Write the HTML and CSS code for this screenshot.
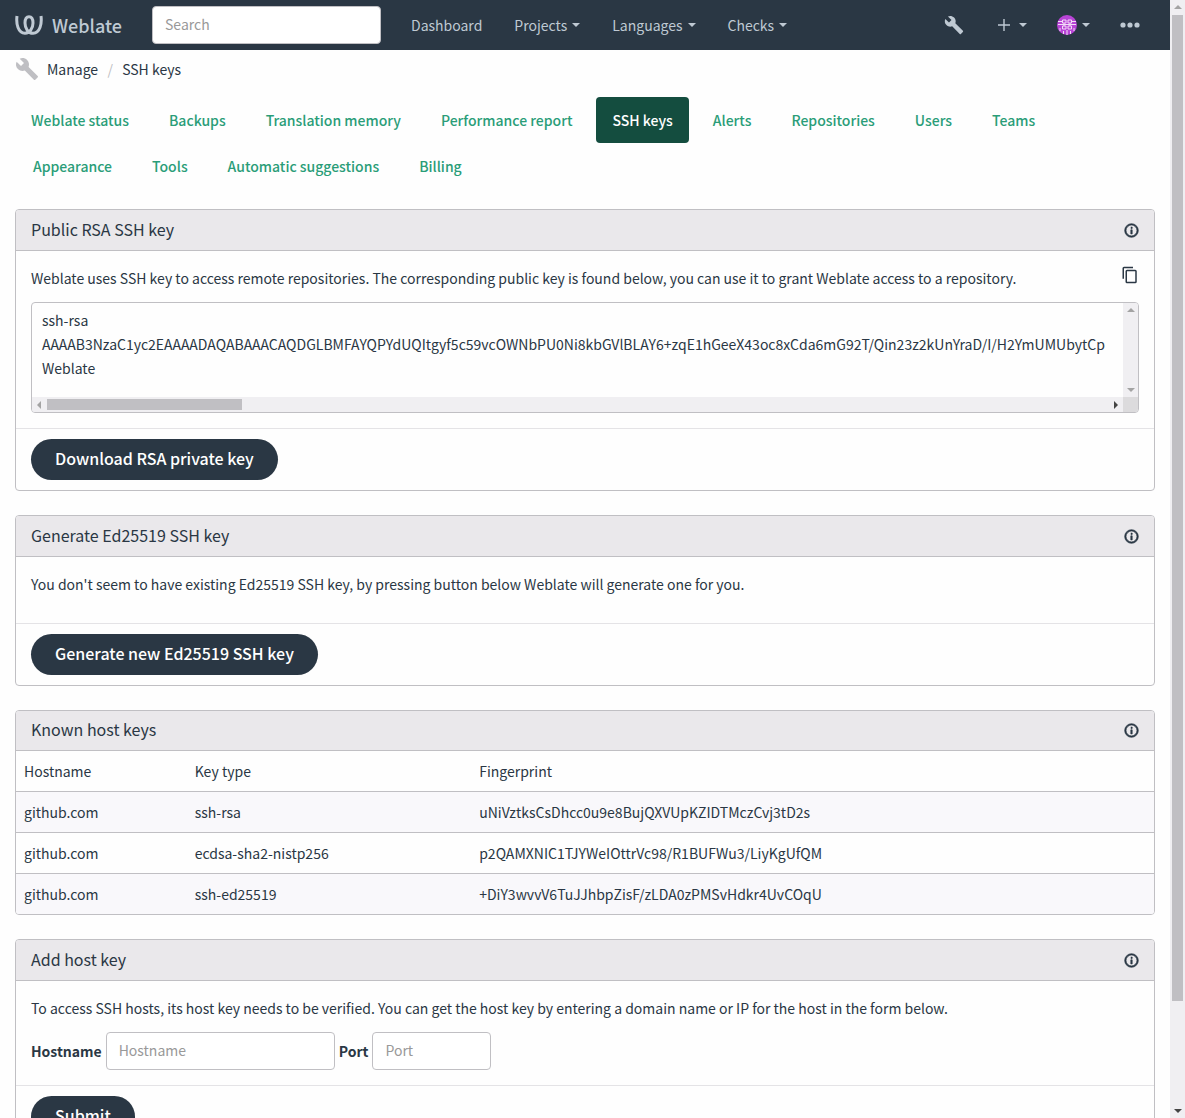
FILE: index.html
```html
<!DOCTYPE html>
<html lang="en">
<head>
<meta charset="utf-8">
<title>SSH keys - Weblate</title>
<link rel="stylesheet" href="styles.css">
</head>
<body>
<svg class="sprite" aria-hidden="true">
  <symbol id="wrench" viewBox="0 0 24 24"><path d="M22.7 19l-9.1-9.1c.9-2.3.4-5-1.5-6.9-2-2-5-2.4-7.4-1.3L9 6 6 9 1.6 4.7C.4 7.1.9 10.1 2.9 12.1c1.9 1.9 4.6 2.4 6.9 1.5l9.1 9.1c.4.4 1 .4 1.4 0l2.3-2.3c.5-.4.5-1.1.1-1.4z"/></symbol>
  <symbol id="info" viewBox="1 1 22 22"><path d="M11 9h2V7h-2m1 13c-4.410 0-8-3.590-8-8s3.590-8 8-8 8 3.590 8 8-3.590 8-8 8m0-18A10 10 0 0 0 2 12a10 10 0 0 0 10 10 10 10 0 0 0 10-10A10 10 0 0 0 12 2m-1 15h2v-6h-2v6z" stroke="currentColor"/></symbol>
  <symbol id="copy" viewBox="0 0 24 24"><path d="M19 21H8V7h11m0-2H8a2 2 0 0 0-2 2v14a2 2 0 0 0 2 2h11a2 2 0 0 0 2-2V7a2 2 0 0 0-2-2m-3-4H4a2 2 0 0 0-2 2v14h2V3h12V1z"/></symbol>
</svg>
<div class="page">
  <header class="navbar">
    <a class="brand" href="#">
      <svg class="logo" viewBox="0 0 28 20" aria-hidden="true"><g fill="none" stroke="currentColor" stroke-width="3"><path d="M2 1C1 9 3 18 10 18.300C15 18 18 13 18 8C18 4 16.500 1.700 14 1.700C11.500 1.700 10 4 10 8C10 13 13 18.300 18 18.300C25 18 27 9 26 1"/></g></svg>
      <span>Weblate</span>
    </a>
    <input class="field search" type="search" placeholder="Search" aria-label="Search">
    <nav class="menu">
      <a href="#">Dashboard</a>
      <a href="#">Projects<i class="caret"></i></a>
      <a href="#">Languages<i class="caret"></i></a>
      <a href="#">Checks<i class="caret"></i></a>
    </nav>
    <nav class="tools">
      <a href="#" aria-label="Manage"><svg class="icon-nav" aria-hidden="true"><use href="#wrench"/></svg></a>
      <a href="#" aria-label="Add"><svg class="plus" viewBox="0 0 12 12" aria-hidden="true"><path d="M6 0v12M0 6h12" stroke="currentColor" stroke-width="1.400"/></svg><i class="caret"></i></a>
      <a href="#" aria-label="Profile"><svg class="avatar" viewBox="0 0 20 20" aria-hidden="true"><circle cx="10" cy="10" r="10" fill="#b844d6"/><path d="M1 6.500h4M15 6.500h4M1 9.500h3M16 9.500h3M5.500 5h3.500v3h-3.500zM11 5h3.500v3h-3.500zM5.500 11h3.500v3h-3.500zM11 11h3.500v3h-3.500zM7 8v3M13 8v3M4 9.500h12M10 15v5M6.500 16v3M13.500 16v3M3 13v3M17 13v3" fill="none" stroke="#f3dcf8"/></svg><i class="caret"></i></a>
      <a href="#" aria-label="More"><svg class="dots" viewBox="0 0 20 6" aria-hidden="true"><circle cx="3" cy="3" r="2.600"/><circle cx="10" cy="3" r="2.600"/><circle cx="17" cy="3" r="2.600"/></svg></a>
    </nav>
  </header>
  <nav class="breadcrumb" aria-label="Breadcrumb">
    <svg class="icon-crumb" aria-hidden="true"><use href="#wrench"/></svg>
    <a href="#">Manage</a><span class="sep">/</span><a href="#">SSH keys</a>
  </nav>
  <main>
    <ul class="pills">
      <li><a href="#">Weblate status</a></li>
      <li><a href="#">Backups</a></li>
      <li><a href="#">Translation memory</a></li>
      <li><a href="#">Performance report</a></li>
      <li><a class="active" href="#">SSH keys</a></li>
      <li><a href="#">Alerts</a></li>
      <li><a href="#">Repositories</a></li>
      <li><a href="#">Users</a></li>
      <li><a href="#">Teams</a></li>
      <li><a href="#">Appearance</a></li>
      <li><a href="#">Tools</a></li>
      <li><a href="#">Automatic suggestions</a></li>
      <li><a href="#">Billing</a></li>
    </ul>

    <section class="panel">
      <div class="panel-head"><h4>Public RSA SSH key</h4><a href="#" aria-label="Documentation"><svg class="icon-info" aria-hidden="true"><use href="#info"/></svg></a></div>
      <div class="panel-body">
        <div class="intro"><p>Weblate uses SSH key to access remote repositories. The corresponding public key is found below, you can use it to grant Weblate access to a repository.</p><button class="copy" type="button" aria-label="Copy"><svg class="icon-copy" aria-hidden="true"><use href="#copy"/></svg></button></div>
        <div class="keybox">
          <pre class="key">ssh-rsa
AAAAB3NzaC1yc2EAAAADAQABAAACAQDGLBMFAYQPYdUQItgyf5c59vcOWNbPU0Ni8kbGVlBLAY6+zqE1hGeeX43oc8xCda6mG92T/Qin23z2kUnYraD/I/H2YmUMUbytCp
Weblate</pre>
          <div class="bar vertical"><i class="arrow up"></i><i class="arrow down"></i></div>
          <div class="bar horizontal"><i class="arrow left"></i><i class="thumb"></i><i class="arrow right"></i></div>
          <div class="corner"></div>
        </div>
      </div>
      <div class="panel-foot"><button class="btn" type="button">Download RSA private key</button></div>
    </section>

    <section class="panel">
      <div class="panel-head"><h4>Generate Ed25519 SSH key</h4><a href="#" aria-label="Documentation"><svg class="icon-info" aria-hidden="true"><use href="#info"/></svg></a></div>
      <div class="panel-body"><p class="spaced">You don't seem to have existing Ed25519 SSH key, by pressing button below Weblate will generate one for you.</p></div>
      <div class="panel-foot"><button class="btn" type="button">Generate new Ed25519 SSH key</button></div>
    </section>

    <section class="panel">
      <div class="panel-head compact"><h4>Known host keys</h4><a href="#" aria-label="Documentation"><svg class="icon-info" aria-hidden="true"><use href="#info"/></svg></a></div>
      <table>
        <colgroup><col class="col-host"><col class="col-type"><col></colgroup>
        <thead><tr><th>Hostname</th><th>Key type</th><th>Fingerprint</th></tr></thead>
        <tbody>
          <tr><td>github.com</td><td>ssh-rsa</td><td>uNiVztksCsDhcc0u9e8BujQXVUpKZIDTMczCvj3tD2s</td></tr>
          <tr><td>github.com</td><td>ecdsa-sha2-nistp256</td><td>p2QAMXNIC1TJYWeIOttrVc98/R1BUFWu3/LiyKgUfQM</td></tr>
          <tr><td>github.com</td><td>ssh-ed25519</td><td>+DiY3wvvV6TuJJhbpZisF/zLDA0zPMSvHdkr4UvCOqU</td></tr>
        </tbody>
      </table>
    </section>

    <form class="panel">
      <div class="panel-head"><h4>Add host key</h4><a href="#" aria-label="Documentation"><svg class="icon-info" aria-hidden="true"><use href="#info"/></svg></a></div>
      <div class="panel-body">
        <p class="spaced">To access SSH hosts, its host key needs to be verified. You can get the host key by entering a domain name or IP for the host in the form below.</p>
        <div class="inline-form">
          <label for="host">Hostname</label><input class="field host" id="host" type="text" placeholder="Hostname">
          <label for="port">Port</label><input class="field port" id="port" type="text" placeholder="Port">
        </div>
      </div>
      <div class="panel-foot"><button class="btn" type="submit">Submit</button></div>
    </form>
  </main>
</div>
<div class="bar vertical page-bar"><i class="arrow up"></i><i class="thumb"></i><i class="arrow down dark"></i></div>
</body>
</html>
```
FILE: styles.css
```css
* { box-sizing: border-box; }
body {
  margin: 0;
  height: 100vh;
  overflow: hidden;
  display: flex;
  background: #fefefe;
  color: #2a3744;
  font: 14px/24px "Noto Sans CJK SC", "Noto Sans", sans-serif;
}
.sprite { display: none; }
svg { display: block; fill: currentColor; }
a { color: inherit; text-decoration: none; }
p, h4, pre, ul { margin: 0; }
.page { flex: 1; min-width: 0; overflow: hidden; }

.navbar {
  display: flex;
  align-items: center;
  height: 50px;
  padding: 0 30px 0 15px;
  background: #2a3744;
  color: #bfc9d3;
}
.brand { display: flex; align-items: center; gap: 9px; width: 137px; font-size: 18px; font-weight: 500; }
.logo { width: 28px; height: 20px; }
.field {
  height: 38px;
  padding: 0 12px 2px;
  border: 1px solid #c0bfc3;
  border-radius: 4px;
  background: #fff;
  color: #2a3744;
  font: inherit;
}
.field::placeholder { color: #999; opacity: 1; }
.search { width: 229px; }
.menu { display: flex; gap: 32px; margin-left: 30px; }
.menu a, .tools a { display: flex; align-items: center; }
.caret { margin-left: 5px; border: 4px solid transparent; border-top-color: currentColor; border-bottom: 0; }
.tools { display: flex; align-items: center; gap: 30px; margin-left: auto; }
.icon-nav { width: 20px; height: 20px; margin-right: 4px; }
.plus { width: 12px; height: 12px; margin-right: 4px; }
.avatar { width: 20px; height: 20px; }
.dots { width: 20px; height: 6px; }

.breadcrumb { display: flex; align-items: center; height: 38px; padding: 0 15px; }
.icon-crumb { width: 24px; height: 24px; margin-right: 8px; color: #bfbfc3; }
.sep { width: 24px; text-align: center; color: #bfbfc3; }

main { padding: 9px 15px 0; }
.pills { display: flex; flex-wrap: wrap; column-gap: 6px; padding: 0; margin-bottom: 20px; list-style: none; font-weight: 500; color: #2a9d78; }
.pills li + li { margin-left: 2px; }
.pills a { display: block; padding: 11px 16px; border-radius: 4px; }
.pills .active { background: #144d3f; color: #fff; }

.panel { margin-bottom: 24px; border: 1px solid #c0bfc3; border-radius: 4px; overflow: hidden; }
.panel-head {
  display: flex;
  align-items: center;
  justify-content: space-between;
  height: 41px;
  padding: 0 15px;
  border-bottom: 1px solid #c0bfc3;
  background: #eae8eb;
}
.panel-head.compact { height: 40px; }
h4 { padding-bottom: 3px; font-size: 16px; font-weight: 400; }
.icon-info { width: 15px; height: 15px; }
.panel-body { padding: 15px; }
.intro { display: flex; align-items: flex-start; justify-content: space-between; margin-bottom: 12px; }
.spaced { margin-bottom: 12px; }
.copy { padding: 0; border: 0; background: none; color: inherit; }
.icon-copy { width: 18px; height: 18px; }
.keybox {
  display: grid;
  grid-template: 94px 15px / 1fr 15px;
  border: 1px solid #c0bfc3;
  border-radius: 4px;
  overflow: hidden;
}
.key { min-width: 0; padding: 5px 10px; overflow: hidden; font: inherit; }
.bar { display: flex; align-items: center; justify-content: space-between; background: #f0eff2; }
.vertical { flex-direction: column; padding: 5px 0; }
.horizontal { padding: 0 5px; }
.corner { background: #dcdbdd; }
.thumb { background: #c0bfc3; }
.horizontal .thumb { width: 195px; height: 11px; margin: 0 auto 0 6px; }
.arrow { border: 4px solid transparent; color: #a3a3a3; }
.up { border-top: 0; border-bottom-color: currentColor; }
.down { border-bottom: 0; border-top-color: currentColor; }
.left { border-left: 0; border-right-color: currentColor; }
.right { border-right: 0; border-left-color: currentColor; color: #444; }
.dark { color: #444; }
.page-bar { width: 15px; height: 100%; }
.page-bar .thumb { width: 11px; height: 89%; margin: 6px 0 auto; }

.panel-foot { padding: 10px 15px; border-top: 1px solid #e4e3e6; }
.btn {
  display: block;
  height: 41px;
  padding: 0 24px 3px;
  border: 0;
  border-radius: 21px;
  background: #2a3744;
  color: #fff;
  font: inherit;
  font-size: 16px;
  font-weight: 500;
}
table { width: 100%; border-collapse: collapse; table-layout: fixed; }
.col-host { width: 15%; }
.col-type { width: 25%; }
th, td { height: 41px; padding: 0 8px; font-weight: 400; text-align: left; }
th { height: 40px; }
tbody tr { border-top: 1px solid #c0bfc3; }
tbody tr:nth-child(odd) { background: #f9f8fb; }
.inline-form { display: flex; align-items: center; gap: 4px; }
label { font-weight: 700; }
.host { width: 229px; }
.port { width: 119px; }
```
